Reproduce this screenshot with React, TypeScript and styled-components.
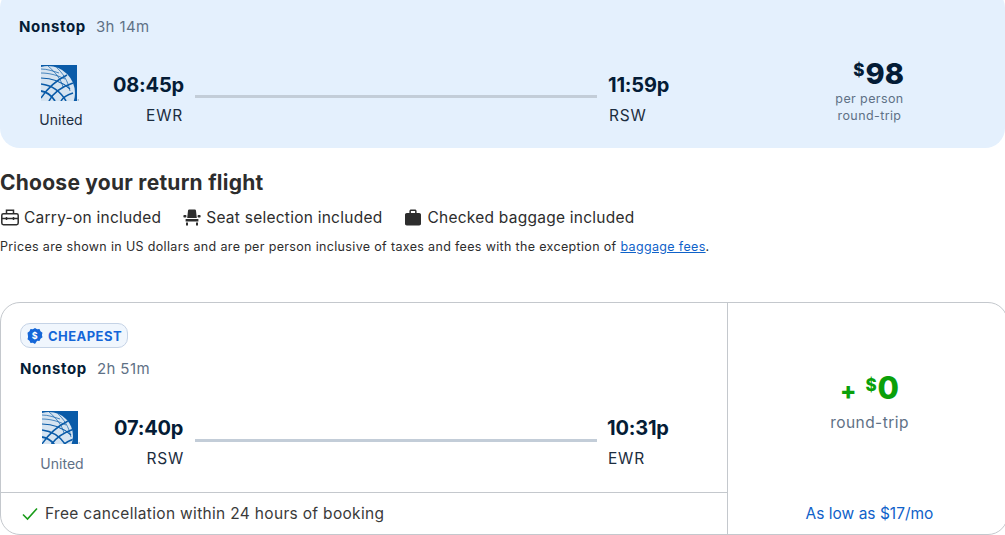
import React from "react";
import styled, { createGlobalStyle } from "styled-components";

const Global = createGlobalStyle`
  html, body { margin: 0; padding: 0; background: #fff; overflow: hidden; }
  body { font-family: Inter, "Liberation Sans", sans-serif; color: #2d2d2d; }
`;
const Page = styled.div`width: 1005px; height: 535px; overflow: hidden;`;
const Banner = styled.section`
  position: relative; height: 160px; margin-top: -12px; background: #e4f0fd; border-radius: 20px;
  padding: 30px 0 0 19px; box-sizing: border-box;
`;
const Stops = styled.div<{ $top?: number }>`
  display: flex; align-items: baseline; gap: 10px; height: 18px; line-height: 18px; margin-top: ${p => p.$top ?? 0}px;
`;
const StopLabel = styled.span`font-size: 15px; font-weight: 700; color: #041c36; letter-spacing: .65px;`;
const Duration = styled.span`font-size: 15px; color: #5f7186; letter-spacing: .4px;`;
const FlightRow = styled.div<{ $top: number; $timeCol: number }>`
  display: grid; grid-template-columns: 82px ${p => p.$timeCol}px 402px auto; align-items: start;
  margin: ${p => p.$top}px 0 0 12px;
`;
const Airline = styled.div`display: flex; flex-direction: column; align-items: center; width: 55px;`;
const AirlineName = styled.span<{ $muted?: boolean; $gap: number }>`
  font-size: 14px; line-height: 16px; margin-top: ${p => p.$gap}px; padding-left: 5px;
  color: ${p => p.$muted ? "#5f7186" : "#1c2d40"};
`;
const Time = styled.div<{ $top: number; $left?: number }>`
  display: flex; flex-direction: column; width: fit-content; min-width: 71px; padding-top: ${p => p.$top}px; margin-left: ${p => p.$left ?? 0}px;
`;
const Clock = styled.span`font-size: 20px; line-height: 24px; font-weight: 700; color: #041c36; letter-spacing: -.2px;`;
const Code = styled.span<{ $end?: boolean }>`
  font-size: 15.500px; line-height: 18px; color: #1c2d40; margin-top: 10px; letter-spacing: .8px;
  align-self: ${p => p.$end ? "flex-end" : "flex-start"};
  padding: 0 ${p => p.$end ? 1 : 0}px 0 ${p => p.$end ? 0 : 1}px;
`;
const Line = styled.div<{ $top: number }>`height: 3px; background: #c3cdd8; margin-top: ${p => p.$top}px;`;
const Fare = styled.div`
  position: absolute; top: 69px; right: 101px; display: flex; flex-direction: column; align-items: flex-end; color: #5f7186;
`;
const FareAmount = styled.div`
  font-size: 29px; line-height: 34px; font-weight: 800; color: #041c36; display: flex; align-items: flex-start;
  span { font-size: 17px; line-height: 22px; margin: 2px 1px 0 0; }
`;
const FareNote = styled.span`
  font-size: 12.500px; line-height: 17px; letter-spacing: .4px; text-align: center; width: 69px; display: block; white-space: nowrap;
  &:first-of-type { margin-top: -1px; }
`;
const Content = styled.section`padding: 22px 0 0 0;`;
const Title = styled.h2`
  margin: 0; font-size: 21px; line-height: 26px; font-weight: 700; color: #2d2d2d; letter-spacing: .25px;
`;
const Perks = styled.ul`
  display: flex; gap: 22px; list-style: none; margin: 10px 0 0 1px; padding: 0; height: 22px; align-items: center;
`;
const Perk = styled.li`
  display: flex; align-items: center; gap: 5px; font-size: 15.500px; color: #2d2d2d; letter-spacing: .25px; white-space: nowrap;
`;
const Notice = styled.p`
  margin: 11px 0 0; font-size: 12.500px; line-height: 16px; color: #2d2d2d; letter-spacing: .34px; white-space: nowrap;
  a { color: #0f62c9; text-decoration: underline; }
`;
const Card = styled.article`
  margin: 47px -3px 0 0; height: 233px; box-sizing: border-box; border: 1px solid #c4c8cd; border-radius: 20px;
  display: grid; grid-template-columns: 727px 1fr; overflow: hidden; background: #fff;
`;
const Main = styled.div`display: flex; flex-direction: column; border-right: 1px solid #c4c8cd;`;
const MainTop = styled.div`flex: 1; padding: 20px 0 0 19px;`;
const Badge = styled.span`
  display: inline-flex; align-items: center; gap: 5px; height: 25px; width: 108px; box-sizing: border-box;
  padding-left: 6px; border: 1px solid #c5d3e6; border-radius: 10px; background: #f0f6fd;
  font-size: 13px; font-weight: 700; color: #1466d8; letter-spacing: .45px;
`;
const Footer = styled.div`
  height: 42px; border-top: 1px solid #c4c8cd; box-sizing: border-box; display: flex; align-items: center; gap: 7px;
  padding-left: 21px; font-size: 15.500px; color: #3a3a3a; letter-spacing: .32px;
`;
const Side = styled.aside`
  display: flex; flex-direction: column; align-items: center; padding: 66px 0 0 4px; box-sizing: border-box;
`;
const Price = styled.div`display: flex; align-items: flex-start; color: #0aa00a; font-weight: 800; height: 40px;`;
const Plus = styled.span`font-size: 24px; line-height: 26px; margin: 9px 9px 0 0;`;
const Sup = styled.span`font-size: 17px; line-height: 22px; margin: 5px 1px 0 0;`;
const Zero = styled.span`font-size: 31px; line-height: 38px;`;
const RoundTrip = styled.span`font-size: 15.500px; line-height: 20px; color: #5f7186; margin-top: 4px; letter-spacing: .45px;`;
const Monthly = styled.a`margin-top: auto; margin-bottom: 11px; font-size: 15.500px; line-height: 18px; color: #0f62c9;`;

const Logo = ({ id, h = 36 }: { id: string; h?: number }) => (
  <svg width="40" height={h} viewBox={`0 0 40 ${h}`} aria-hidden="true">
    <defs>
      <clipPath id={id}><circle cx="7" cy={h - 8} r={h - 9} /></clipPath>
    </defs>
    <rect x="2" y="0" width="36" height={h} fill="#0a5ba8" />
    <svg x="2" y="0" width="36" height={h} viewBox={`0 0 36 ${h}`}>
      <circle cx="7" cy={h - 8} r={h - 9} fill="#d6e4f1" />
      <g clipPath={`url(#${id})`} fill="none" stroke="#0a5ba8">
        <path strokeWidth=".7" d="M0 4 C6 4 12 6 18 8M0 8 C8 8 16 10 24 14" />
        <path strokeWidth="1.200" d="M0 13 C10 13 20 16 29 24" />
        <path strokeWidth="1.600" d="M0 19 C9 20 18 24 25 36" />
        <path strokeWidth="1.800" d="M0 26 C6 27 11 31 14 36" />
        <path strokeWidth=".7" d="M7 1 C14 7 20 14 22 22M14 1 C22 8 27 16 29 26" />
        <path strokeWidth="1.400" d="M0 33 C6 24 14 16 26 10" />
        <path strokeWidth="1.600" d="M8 36 C12 28 20 22 32 18" />
        <path strokeWidth="1.600" d="M20 36 C22 32 26 30 32 28" />
      </g>
    </svg>
    <circle cx="39.2" cy={h - 1} r=".7" fill="#7d97b5" />
  </svg>
);

const CarryOn = () => (
  <svg width="18" height="17" viewBox="0 0 18 17" fill="none" stroke="#2d2d2d" strokeWidth="1.500" aria-hidden="true">
    <rect x=".8" y="4.700" width="16.400" height="11" rx="1.600" />
    <path d="M5.500 4.500V1.300h7v3.200M.8 9.500h16.400M5.500 8v3M12.500 8v3" />
  </svg>
);
const Seat = () => (
  <svg width="18" height="17" viewBox="0 0 18 17" fill="#2d2d2d" aria-hidden="true">
    <path d="M5 1.800C5 .9 5.700.4 6.500.4h5c.8 0 1.500.5 1.500 1.400L13.800 9H4.200z" />
    <rect x=".4" y="6" width="3" height="2.600" rx=".8" />
    <rect x="14.600" y="6" width="3" height="2.600" rx=".8" />
    <path d="M2.600 10h12.800v2.600H2.600zM3 13.400h2v3.200H3zM13 13.400h2v3.200h-2z" />
  </svg>
);
const Checked = () => (
  <svg width="18" height="17" viewBox="0 0 18 17" aria-hidden="true">
    <path fill="#2d2d2d" d="M5.400 4V2.200C5.400 1.200 6.200.5 7.200.5h3.600c1 0 1.800.7 1.800 1.700V4h2.600c1 0 1.800.8 1.800 1.800v9c0 1-.8 1.700-1.800 1.700H2.800c-1 0-1.800-.7-1.800-1.700v-9C1 4.800 1.800 4 2.800 4zm1.500 0h4.200V2H6.900z" />
  </svg>
);
const Shield = () => (
  <svg width="16" height="16" viewBox="0 0 16 16" aria-hidden="true">
    <path fill="#1466d8" d="M8 0l2.100 1.300 2.400-.2 1 2.200 2 1.400-.6 2.300.6 2.300-2 1.400-1 2.200-2.400-.2L8 16l-2.100-1.300-2.400.2-1-2.200-2-1.400.6-2.300L.5 4.700l2-1.400 1-2.200 2.400.2z" />
    <text x="8" y="11.300" textAnchor="middle" fontSize="9" fontWeight="700" fill="#fff" fontFamily="Inter, sans-serif">$</text>
  </svg>
);
const Check = () => (
  <svg width="16" height="14" viewBox="0 0 16 14" fill="none" stroke="#1a9c1a" strokeWidth="1.600" aria-hidden="true">
    <path d="M1 7.500l4.500 4.500L15 1.500" />
  </svg>
);

export default function App() {
  return (
    <Page>
      <Global />
      <Banner>
        <Stops>
          <StopLabel>Nonstop</StopLabel>
          <Duration>3h 14m</Duration>
        </Stops>
        <FlightRow $top={29} $timeCol={82}>
          <Airline>
            <Logo id="logo-a" />
            <AirlineName $gap={11}>United</AirlineName>
          </Airline>
          <Time $top={8}>
            <Clock>08:45p</Clock>
            <Code $end>EWR</Code>
          </Time>
          <Line $top={30} />
          <Time $top={8} $left={11}>
            <Clock>11:59p</Clock>
            <Code>RSW</Code>
          </Time>
        </FlightRow>
        <Fare>
          <FareAmount><span>$</span>98</FareAmount>
          <FareNote>per person</FareNote>
          <FareNote>round-trip</FareNote>
        </Fare>
      </Banner>
      <Content>
        <Title>Choose your return flight</Title>
        <Perks>
          <Perk><CarryOn />Carry-on included</Perk>
          <Perk><Seat />Seat selection included</Perk>
          <Perk><Checked />Checked baggage included</Perk>
        </Perks>
        <Notice>Prices are shown in US dollars and are per person inclusive of taxes and fees with the exception of <a href="#fees">baggage fees</a>.</Notice>
        <Card>
          <Main>
            <MainTop>
              <Badge><Shield />CHEAPEST</Badge>
              <Stops $top={12}>
                <StopLabel>Nonstop</StopLabel>
                <Duration>2h 51m</Duration>
              </Stops>
              <FlightRow $top={33} $timeCol={81}>
                <Airline>
                  <Logo id="logo-b" h={33} />
                  <AirlineName $muted $gap={12}>United</AirlineName>
                </Airline>
                <Time $top={5}>
                  <Clock>07:40p</Clock>
                  <Code $end>RSW</Code>
                </Time>
                <Line $top={28} />
                <Time $top={5} $left={10}>
                  <Clock>10:31p</Clock>
                  <Code>EWR</Code>
                </Time>
              </FlightRow>
            </MainTop>
            <Footer><Check />Free cancellation within 24 hours of booking</Footer>
          </Main>
          <Side>
            <Price>
              <Plus>+</Plus>
              <Sup>$</Sup>
              <Zero>0</Zero>
            </Price>
            <RoundTrip>round-trip</RoundTrip>
            <Monthly>As low as $17/mo</Monthly>
          </Side>
        </Card>
      </Content>
    </Page>
  );
}
